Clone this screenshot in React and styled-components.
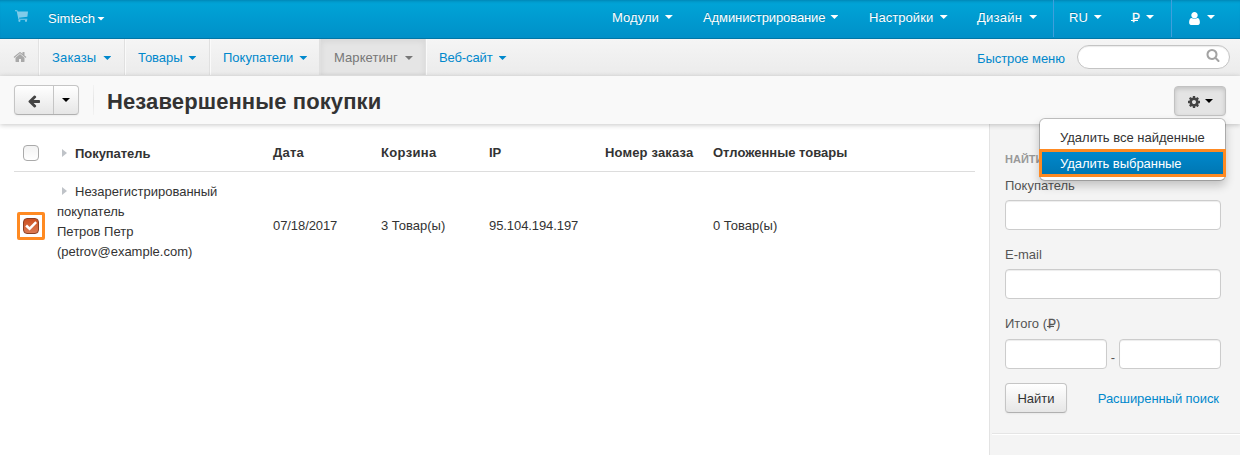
import React from "react";
import styled, { createGlobalStyle, css } from "styled-components";

const Global = createGlobalStyle`
  *, *::before, *::after { box-sizing: border-box; }
  html, body { margin: 0; padding: 0; }
  body {
    width: 1240px; height: 455px; overflow: hidden; background: #fff; color: #333;
    font: 13px/20px "Liberation Sans", Arial, sans-serif;
  }
`;

const Page = styled.div`width: 1240px; height: 455px; display: flex; flex-direction: column; overflow: hidden;`;
const Label = styled.span`letter-spacing: ${(p) => p.$ls || 0}px; white-space: nowrap;`;
const Caret = styled.i`
  display: block; flex: none; width: 8px; height: 4px; background: ${(p) => p.$color || "currentColor"};
  clip-path: polygon(0 0, 100% 0, 50% 100%);
  margin-left: ${(p) => p.$gap ?? 7}px; margin-top: ${(p) => p.$top || 0}px;
`;
const Svg = styled.svg`display: block; flex: none; fill: currentColor;`;

const TopBar = styled.header`
  flex: none; height: 39px; display: flex; color: #fff; border-bottom: 1px solid #0076a6;
  background: linear-gradient(#00a5d8, #0090c8); box-shadow: inset 0 3px 3px -2px rgba(0, 60, 100, .35);
  text-shadow: 0 -1px 0 rgba(0, 0, 0, .22);
`;
const Brand = styled.div`display: flex; align-items: center; width: 574px; padding: 0 0 0 15px;`;
const CartIcon = styled.span`color: #80cbe9; width: 33px; margin-top: -7px;`;
const TopItem = styled.div`
  display: flex; align-items: center; flex: none; height: 37px; padding: 0 0 1px ${(p) => p.$pad}px; width: ${(p) => p.$w}px;
  border-left: ${(p) => (p.$line ? "1px solid #3f9fdc" : "0")};
`;

const NavBar = styled.nav`
  flex: none; height: 37px; display: flex; color: #0088cc; background: linear-gradient(#f5f5f5, #ebebeb);
`;
const HomeCell = styled.div`width: 39px; padding: 11px 0 0 12.5px; color: #a9a9a9; border-right: 1px solid #e2e2e2;`;
const NavItem = styled.div`
  display: flex; align-items: center; width: ${(p) => p.$w}px; padding: 2px 0 0 12px; height: 36px;
  border-left: 1px solid #fafafa; border-right: ${(p) => (p.$last ? "0" : "1px solid #e0e0e0")};
  ${(p) => p.$active && css`padding-left: 13px; color: #777; background: #e5e5e5; box-shadow: inset 0 2px 6px rgba(0,0,0,.07); border-left-color: #e0e0e0;`}
`;
const QuickMenu = styled.div`margin-left: auto; display: flex; padding: 10px 0 0; width: 100px;`;
const Search = styled.div`
  flex: none; width: 153px; height: 24px; margin: 6px 10px 0 0; border: 1px solid #c4c4c4; border-radius: 12px; background: #fff;
  box-shadow: inset 0 1px 1px rgba(0,0,0,.08); color: #a3a3a3; display: flex; justify-content: flex-end; padding: 2px 9px 0 0;
`;

const TitleBar = styled.div`
  flex: none; height: 48px; position: relative; z-index: 2; display: flex; background: #f9f9f9; padding-left: 14px;
  box-shadow: 0 1px 5px rgba(0,0,0,.22);
`;
const buttonFace = css`
  border: 1px solid #c5c5c5; border-bottom-color: #b0b0b0; border-radius: 4px; background: linear-gradient(#fff, #e6e6e6);
  box-shadow: inset 0 1px 0 rgba(255,255,255,.2), 0 1px 2px rgba(0,0,0,.05);
`;
const BackGroup = styled.div`${buttonFace} display: flex; width: 65px; height: 30px; margin-top: 9px; overflow: hidden;`;
const BackButton = styled.div`width: 39px; padding: 8px 0 0 12px; border-right: 1px solid #c5c5c5; color: #444;`;
const BackMenu = styled.div`flex: 1; display: flex; justify-content: center; padding-top: 12px;`;
const Divider = styled.i`width: 1px; height: 30px; margin: 9px 13px 0 14px; background: linear-gradient(#f3f3f3, #e5e5e5, #f3f3f3);`;
const Title = styled.h1`margin: 0; font-size: 22px; line-height: 52px; height: 48px; font-weight: 700; white-space: nowrap; letter-spacing: .11px;`;
const Actions = styled.div`position: relative; margin: 10px 14px 0 auto; width: 52px; height: 30px;`;
const GearButton = styled.div`
  display: flex; height: 30px; padding: 8px 0 0 12px; border: 1px solid #c2c2c2; border-radius: 4px; background: #e4e4e4;
  box-shadow: inset 0 2px 4px rgba(0,0,0,.15), 0 1px 2px rgba(0,0,0,.05); color: #444;
`;
const Menu = styled.div`
  position: absolute; right: 0; top: 32px; width: 187px; height: 63px; padding: 6px 0; border: 1px solid rgba(0,0,0,.22);
  background-clip: padding-box; background-color: #fff; border-radius: 6px; box-shadow: 0 5px 10px rgba(0,0,0,.2);
`;
const MenuItem = styled.div`
  height: 26px; line-height: 25px; padding-left: 20px;
  ${(p) => p.$active && css`
    margin: -2px -1px 0; height: 28px; line-height: 23px; padding-left: 18px; color: #fff; border: 3px solid #ff8a22; background: linear-gradient(#0088cc, #0077b3);
  `}
`;

const Body = styled.div`flex: 1; display: flex; min-height: 0;`;
const Main = styled.main`width: 989px; padding: 10px 0 0 14px;`;
const Row = styled.div`
  display: grid; grid-template-columns: 43px 216px 108px 108px 116px 108px 1fr; width: 961px; align-items: center;
  height: ${(p) => p.$h}px; ${(p) => p.$head && "border-bottom: 1px solid #ddd; font-weight: 700;"}
`;
const CheckCell = styled.div`display: flex; padding-left: ${(p) => p.$pad}px;`;
const Box = styled.i`
  display: block; width: 16px; height: 16px; border-radius: 4px; border: 1px solid #aaa; background: linear-gradient(#f2f2f2, #fff);
`;
const Marked = styled.div`width: 28px; height: 28px; padding: 3px; border: 3px solid #ff8a22; border-radius: 2px; margin-bottom: 1px;`;
const Checked = styled.i`
  display: block; width: 16px; height: 16px; border-radius: 4px; border: 1px solid #8c4022; background: linear-gradient(#cc4f1f, #dc7a52);
`;
const Customer = styled.div`display: flex; flex-direction: column; margin-top: ${(p) => p.$top || 0}px;`;
const Line = styled.div`display: flex; align-items: center; height: 20px;`;
const Arrow = styled.i`width: 5px; height: 8px; background: #bfc3c8; clip-path: polygon(0 0, 100% 50%, 0 100%); margin: -1px 8px 0 5px;`;

const Side = styled.aside`flex: 1; background: #f4f4f4; border-left: 1px solid #e3e3e3; color: #555; display: flex; flex-direction: column;`;
const Form = styled.form`height: 310px; border-bottom: 1px solid #e5e5e5; box-shadow: 0 1px 0 #fff; margin: 0 0 0 2px; padding: 25px 19px 0 13px;`;
const Heading = styled.h6`margin: 0 0 7px; font-size: 11px; line-height: 20px; color: #999; font-weight: 700;`;
const Field = styled.div`display: flex; flex-direction: column; margin-bottom: ${(p) => p.$mb}px;`;
const Input = styled.div`
  width: ${(p) => p.$w || 216}px; height: 30px; border: 1px solid #ccc; border-radius: 4px; background: #fff; box-shadow: inset 0 1px 1px rgba(0,0,0,.075);
`;
const FieldGap = styled.i`height: ${(p) => p.$h}px;`;
const Range = styled.div`display: flex; justify-content: space-between; align-items: flex-end; line-height: 22px; width: 216px;`;
const FormFoot = styled.div`display: flex; justify-content: space-between; align-items: center; width: 214px;`;
const Submit = styled.div`${buttonFace} width: 62px; height: 30px; line-height: 29px; text-align: center; color: #333;`;
const Link = styled.span`color: #0088cc; white-space: nowrap; letter-spacing: -.07px; padding-top: 2px;`;
const Ruble = styled.span`
  display: inline-block; height: 20px; line-height: 20px; font-size: 12px; vertical-align: bottom; padding-left: 1px;
  -webkit-text-stroke: .3px currentColor;
  background: linear-gradient(currentColor, currentColor) 0 12px / 7px 1px no-repeat;
`;

const paths = {
  back: "M1664 896v128q0 53-32.5 90.5t-84.5 37.5h-704l293 294q38 36 38 90t-38 90l-75 76q-37 37-90 37-52 0-91-37l-651-652q-37-37-37-90 0-52 37-91l651-650q38-38 91-38 52 0 90 38l75 74q38 38 38 91t-38 91l-293 293h704q52 0 84.5 37.5t32.5 90.5z",
  cog: "M1152 896q0-106-75-181t-181-75-181 75-75 181 75 181 181 75 181-75 75-181zm512-109v222q0 12-8 23t-20 13l-185 28q-19 54-39 91 35 50 107 138 10 12 10 25t-9 23q-27 37-99 108t-94 71q-12 0-26-9l-138-108q-44 23-91 38-16 136-29 186-7 28-36 28h-222q-14 0-24.5-8.5t-11.5-21.5l-28-184q-49-16-90-37l-141 107q-10 9-25 9-14 0-25-11-126-114-165-168-7-10-7-23 0-12 8-23 15-21 51-66.5t54-70.5q-27-50-41-99l-183-27q-13-2-21-12.5t-8-23.5v-222q0-12 8-23t19-13l186-28q14-46 39-92-40-57-107-138-10-12-10-24 0-10 9-23 26-36 98.5-107.5t94.5-71.5q13 0 26 10l138 107q44-23 91-38 16-136 29-186 7-28 36-28h222q14 0 24.5 8.5t11.5 21.5l28 184q49 16 90 37l142-107q9-9 24-9 13 0 25 10 129 119 165 170 7 8 7 22 0 12-8 23-15 21-51 66.5t-54 70.5q26 50 41 98l183 28q13 2 21 12.5t8 23.5z",
  search: "M1216 832q0-185-131.5-316.5t-316.5-131.5-316.5 131.5-131.5 316.5 131.5 316.5 316.5 131.5 316.5-131.5 131.5-316.5zm512 832q0 52-38 90t-90 38q-54 0-90-38l-343-342q-179 124-399 124-143 0-273.5-55.5t-225-150-150-225-55.5-273.5 55.5-273.5 150-225 225-150 273.5-55.5 273.5 55.5 225 150 150 225 55.5 273.5q0 220-124 399l343 343q37 37 37 90z",
  home: "M1472 992v480q0 26-19 45t-45 19h-384v-384h-256v384h-384q-26 0-45-19t-19-45v-480q0-1 .5-3t.5-3l575-474 575 474q1 2 1 6zm223-69l-62 74q-8 9-21 11h-3q-13 0-21-7l-692-577-692 577q-12 8-24 7-13-2-21-11l-62-74q-8-10-7-23.5t11-21.5l719-599q32-26 76-26t76 26l244 204v-195q0-14 9-23t23-9h192q14 0 23 9t9 23v408l219 182q10 8 11 21.5t-7 23.5z",
  user: "M1536 1399q0 109-62.5 187t-150.5 78h-854q-88 0-150.5-78t-62.5-187q0-85 8.5-160.5t31.5-152 58.5-131 94-89 134.5-34.5q131 128 313 128t313-128q76 0 134.5 34.5t94 89 58.5 131 31.5 152 8.5 160.5zm-256-887q0 159-112.5 271.5t-271.5 112.5-271.5-112.5-112.5-271.5 112.5-271.5 271.5-112.5 271.5 112.5 112.5 271.5z",
};
const Icon = ({ name, size }) => (
  <Svg width={size} height={size} viewBox="0 0 1792 1792"><path d={paths[name]} /></Svg>
);

const topItems = [
  { text: "Модули", w: 91, pad: 38, ls: 0.05, gap: 6 },
  { text: "Администрирование", w: 166, pad: 38, ls: -0.09, gap: 5 },
  { text: "Настройки", w: 108, pad: 38, ls: 0.05, gap: 6.5 },
  { text: "Дизайн", w: 114, pad: 38, ls: 0.25, gap: 7 },
];
const navItems = [
  { text: "Заказы", w: 86, ls: 0.15, gap: 7 },
  { text: "Товары", w: 85, ls: -0.05, gap: 6 },
  { text: "Покупатели", w: 110, ls: 0, gap: 6 },
  { text: "Маркетинг", w: 106, active: true, ls: 0.08, gap: 7 },
  { text: "Веб-сайт", w: 90, last: true, ls: -0.12, gap: 6 },
];

export default function App() {
  return (
    <Page>
      <Global />
      <TopBar>
        <Brand>
          <CartIcon>
            <Svg width="13" height="12" viewBox="0 0 13 12">
              <path d="M0 .3h2.3l.4 1.2H13l-.6 5.3-8.4.9.3 1h8v1H3.5L1.7 1.3H0z" />
              <circle cx="4.4" cy="10.8" r="1.1" /><circle cx="11" cy="10.8" r="1.1" />
            </Svg>
          </CartIcon>
          <Label>Simtech</Label><Caret $gap={2} $top={-1} />
        </Brand>
        {topItems.map((i) => (
          <TopItem key={i.text} $w={i.w} $pad={i.pad}><Label $ls={i.ls}>{i.text}</Label><Caret $gap={i.gap} $top={-2} /></TopItem>
        ))}
        <TopItem $line $w={63} $pad={15}><Label>RU</Label><Caret $gap={6} $top={-2} /></TopItem>
        <TopItem $w={55} $pad={15}><Ruble>Р</Ruble><Caret $gap={6} $top={-2} /></TopItem>
        <TopItem $line $w={69} $pad={15}><Icon name="user" size={15} /><Caret $gap={5} $top={-2} /></TopItem>
      </TopBar>
      <NavBar>
        <HomeCell><Icon name="home" size={14} /></HomeCell>
        {navItems.map((i) => (
          <NavItem key={i.text} $w={i.w} $active={i.active} $last={i.last}>
            <Label $ls={i.ls}>{i.text}</Label><Caret $gap={i.gap} />
          </NavItem>
        ))}
        <QuickMenu><Label $ls={-0.07}>Быстрое меню</Label></QuickMenu>
        <Search><Icon name="search" size={14} /></Search>
      </NavBar>
      <TitleBar>
        <BackGroup>
          <BackButton><Icon name="back" size={14} /></BackButton>
          <BackMenu><Caret $color="#000" $gap={0} /></BackMenu>
        </BackGroup>
        <Divider />
        <Title>Незавершенные покупки</Title>
        <Actions>
          <GearButton><Icon name="cog" size={14} /><Caret $color="#000" $gap={4} $top={4} /></GearButton>
          <Menu>
            <MenuItem><Label>Удалить все найденные</Label></MenuItem>
            <MenuItem $active><Label $ls={-0.05}>Удалить выбранные</Label></MenuItem>
          </Menu>
        </Actions>
      </TitleBar>
      <Body>
        <Main>
          <Row $head $h={38}>
            <CheckCell $pad={9}><Box /></CheckCell>
            <Customer $top={2}><Line><Arrow /><Label $ls={-0.05}>Покупатель</Label></Line></Customer>
            <Label $ls={0.25}>Дата</Label><Label $ls={0.35}>Корзина</Label><Label>IP</Label><Label $ls={0.15}>Номер заказа</Label><Label>Отложенные товары</Label>
          </Row>
          <Row $h={108}>
            <CheckCell $pad={3}>
              <Marked><Checked>
                <Svg width="14" height="14" viewBox="0 0 14 14"><path d="M1.2 7.5 3 5.6l2.6 2.5 5.7-5.9L13 3.9l-7.4 7.7z" fill="#fff" /></Svg>
              </Checked></Marked>
            </CheckCell>
            <Customer $top={-9}>
              <Line><Arrow /><Label>Незарегистрированный</Label></Line>
              <Line><Label>покупатель</Label></Line>
              <Line><Label>Петров Петр</Label></Line>
              <Line><Label>(petrov@example.com)</Label></Line>
            </Customer>
            <Label $ls={-0.08}>07/18/2017</Label><Label>3 Товар(ы)</Label><Label $ls={-0.08}>95.104.194.197</Label><span /><Label>0 Товар(ы)</Label>
          </Row>
        </Main>
        <Side>
          <Form>
            <Heading>НАЙТИ</Heading>
            <Field $mb={15}><Label>Покупатель</Label><FieldGap $h={4} /><Input /></Field>
            <Field $mb={15}><Label>E-mail</Label><FieldGap $h={4} /><Input /></Field>
            <Field $mb={14}><Label>Итого (<Ruble>Р</Ruble>)</Label><FieldGap $h={5} />
              <Range><Input $w={102} />-<Input $w={102} /></Range>
            </Field>
            <FormFoot><Submit><Label>Найти</Label></Submit><Link>Расширенный поиск</Link></FormFoot>
          </Form>
        </Side>
      </Body>
    </Page>
  );
}
